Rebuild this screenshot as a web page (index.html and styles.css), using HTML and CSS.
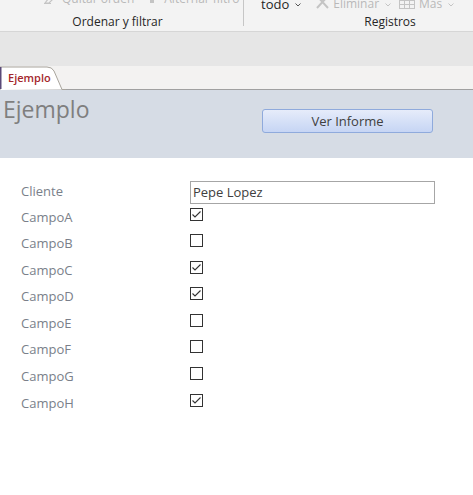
FILE: index.html
```html
<!DOCTYPE html>
<html lang="es">
<head>
<meta charset="utf-8">
<title>Ejemplo</title>
<link rel="stylesheet" href="styles.css">
</head>
<body>
<div class="ribbon">
  <div class="group g1">
    <div class="cmds">
      <span class="cmd dis"><svg class="ico" width="15" height="14" viewBox="0 0 15 14"><path d="M2 12 L9 3 L12 6 L6 12 Z M1 12.5 H8" fill="none" stroke="#c4c4c4" stroke-width="1.2"/></svg>Quitar orden</span>
      <span class="cmd dis filt"><svg class="ico" width="4" height="14" viewBox="0 0 4 14"><rect x="0" y="0" width="4" height="12" fill="#c4c4c4"/></svg><span class="ftxt">Alternar filtro</span></span>
    </div>
    <div class="glabel">Ordenar y filtrar</div>
  </div>
  <div class="sep"></div>
  <div class="group g2">
    <div class="cmds cmds2">
      <span class="cmd blk">todo<svg class="chev" width="6" height="4" viewBox="0 0 6 4"><polyline points="0.5,0.5 3,3 5.5,0.5" fill="none" stroke="#555" stroke-width="1"/></svg></span>
      <span class="cmd dis elim"><svg class="ico" width="13" height="14" viewBox="0 0 13 14"><path d="M1 0 L12 12 M12 0 L1 12" stroke="#c4c4c4" stroke-width="2"/></svg>Eliminar</span>
      <span class="cmd dis arr2"><svg class="chev" width="6" height="4" viewBox="0 0 6 4"><polyline points="0.5,0.5 3,3 5.5,0.5" fill="none" stroke="#c4c4c4" stroke-width="1"/></svg></span>
      <span class="cmd dis mas"><svg class="ico" width="16" height="14" viewBox="0 0 16 14"><rect x="0.5" y="0.5" width="15" height="12" fill="none" stroke="#c4c4c4"/><path d="M0.5 4.5 H15.5 M0.5 8.5 H15.5 M5.5 0.5 V12.5 M10.5 0.5 V12.5" stroke="#c4c4c4"/></svg>Más<svg class="chev" width="6" height="4" viewBox="0 0 6 4"><polyline points="0.5,0.5 3,3 5.5,0.5" fill="none" stroke="#c4c4c4" stroke-width="1"/></svg></span>
    </div>
    <div class="glabel">Registros</div>
  </div>
</div>
<div class="band"></div>
<div class="tabstrip">
  <div class="tab">
    <svg class="tabshape" width="66" height="24" viewBox="0 0 66 24"><path d="M0 24 V1 H47 Q52 1 54 5 L62 23.5 H66" fill="#ffffff" stroke="#a8a49c" stroke-width="1"/><rect x="0" y="1" width="1.5" height="22" fill="#5a4a78"/></svg>
    <span class="tabtext">Ejemplo</span>
  </div>
</div>
<div class="header">
  <div class="title">Ejemplo</div>
  <button class="btn">Ver Informe</button>
</div>
<div class="detail">
  <div class="lbl first">Cliente</div>
  <div class="txt">Pepe Lopez</div>
  <div class="lbl">CampoA</div>
  <div class="cb"><svg width="13" height="13" viewBox="0 0 13 13"><polyline points="2.5,6.5 5,9 10.5,3.5" fill="none" stroke="#333" stroke-width="1.1"/></svg></div>
  <div class="lbl">CampoB</div>
  <div class="cb"></div>
  <div class="lbl">CampoC</div>
  <div class="cb"><svg width="13" height="13" viewBox="0 0 13 13"><polyline points="2.5,6.5 5,9 10.5,3.5" fill="none" stroke="#333" stroke-width="1.1"/></svg></div>
  <div class="lbl">CampoD</div>
  <div class="cb"><svg width="13" height="13" viewBox="0 0 13 13"><polyline points="2.5,6.5 5,9 10.5,3.5" fill="none" stroke="#333" stroke-width="1.1"/></svg></div>
  <div class="lbl">CampoE</div>
  <div class="cb"></div>
  <div class="lbl">CampoF</div>
  <div class="cb"></div>
  <div class="lbl">CampoG</div>
  <div class="cb"></div>
  <div class="lbl">CampoH</div>
  <div class="cb"><svg width="13" height="13" viewBox="0 0 13 13"><polyline points="2.5,6.5 5,9 10.5,3.5" fill="none" stroke="#333" stroke-width="1.1"/></svg></div>
</div>
</body>
</html>
```
FILE: styles.css
```css
html, body {
  margin: 0;
  padding: 0;
  background: #ffffff;
  overflow: hidden;
  font-family: "Open Sans", "Noto Sans", sans-serif;
}

.ribbon {
  height: 31px;
  background: #f3f3f3;
  border-bottom: 1px solid #d6d6d6;
  display: flex;
  overflow: hidden;
}

.group {
  display: flex;
  flex-direction: column;
  flex: none;
}

.g1 { width: 243px; }
.g2 { width: 292px; }

.cmds {
  height: 14px;
  margin-top: -8px;
  display: flex;
  align-items: flex-end;
  font-size: 12px;
  line-height: 14px;
  white-space: nowrap;
  padding-left: 43px;
}

.cmds2 {
  margin-top: -3px;
  padding-left: 17px;
}

.cmd {
  display: flex;
  align-items: flex-end;
  gap: 4px;
}

.filt { margin-left: 16px; }
.ftxt { margin-left: 6px; }
.elim { margin-left: 15px; }
.mas { margin-left: 8px; }

.dis { color: #b9b9b9; }
.blk { color: #262626; font-size: 13px; }

.chev {
  flex: none;
  margin-bottom: 4px;
  margin-left: 2px;
}

.arr2 { margin-left: 4px; }

.ico { flex: none; margin-bottom: 1px; }

.glabel {
  margin-top: 8px;
  text-align: center;
  font-size: 12px;
  line-height: 16px;
  color: #262626;
  padding-right: 8px;
}

.g2 .glabel {
  margin-top: 3px;
  padding-right: 0;
}

.sep {
  width: 1px;
  height: 26px;
  background: #c6c6c6;
  flex: none;
}

.band {
  height: 34px;
  background: #e6e6e6;
}

.tabstrip {
  height: 23px;
  background: #f3f2f1;
  border-bottom: 1px solid #a0a0a0;
  display: flex;
}

.tab {
  position: relative;
  width: 62px;
  height: 24px;
}

.tabshape {
  position: absolute;
  left: 0;
  top: 0;
}

.tabtext {
  position: relative;
  display: block;
  padding-left: 8px;
  padding-top: 4px;
  font-size: 11px;
  font-weight: 600;
  line-height: 16px;
  color: #a4262c;
}

.header {
  height: 68px;
  background: #d6dce5;
  display: flex;
  align-items: flex-start;
  padding-left: 3px;
}

.title {
  margin-top: 4px;
  font-size: 23px;
  line-height: 30px;
  color: #7f7f7f;
}

.btn {
  margin-left: auto;
  margin-right: 40px;
  margin-top: 19px;
  width: 171px;
  height: 24px;
  border: 1px solid #8faadc;
  border-radius: 3px;
  background: linear-gradient(#e6ecfa, #c6d5f4);
  font-family: "Open Sans", "Noto Sans", sans-serif;
  font-size: 13px;
  color: #404040;
  padding: 0;
}

.detail {
  display: grid;
  grid-template-columns: 169px 245px;
  grid-auto-rows: 26.57px;
  padding-top: 23px;
  padding-left: 21px;
}

.lbl {
  font-size: 13px;
  line-height: 18px;
  color: #7a7f8a;
  margin-top: 0;
}

.lbl.first { margin-top: 1px; }

.txt {
  box-sizing: border-box;
  height: 23px;
  border: 1px solid #a6a6a6;
  padding-left: 2px;
  font-size: 13px;
  line-height: 20px;
  color: #404040;
}

.cb {
  box-sizing: border-box;
  width: 13px;
  height: 13px;
  border: 1px solid #333333;
  margin-top: 0;
}

.cb svg {
  display: block;
  margin: -1px 0 0 -1px;
}
```
